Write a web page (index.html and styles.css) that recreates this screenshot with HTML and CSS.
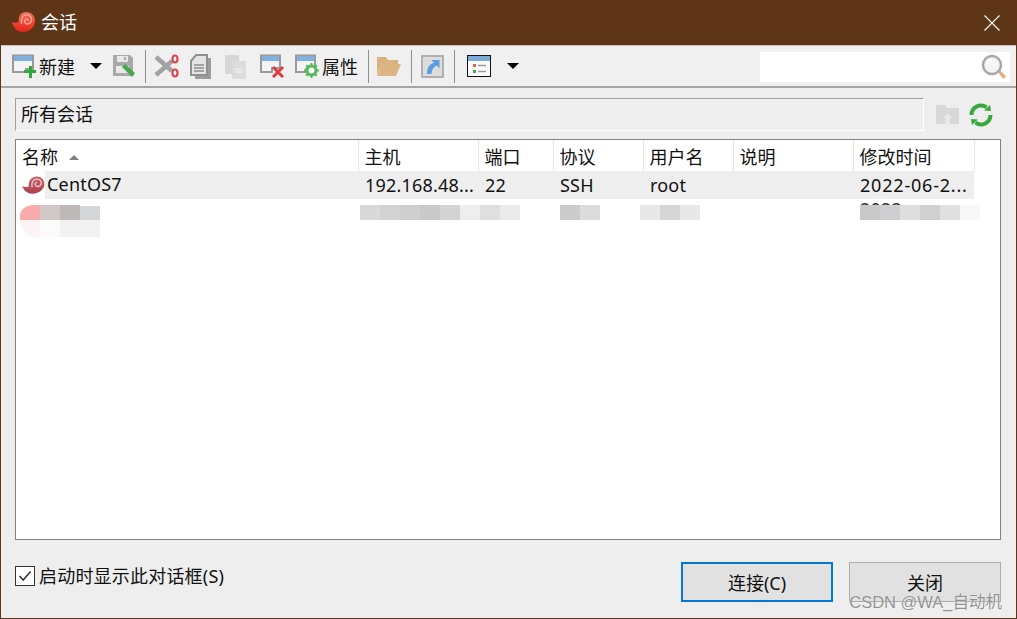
FILE: index.html
```html
<!DOCTYPE html>
<html lang="zh">
<head>
  <meta charset="utf-8">
  <title>会话</title>
  <link rel="stylesheet" href="styles.css">
</head>
<body>
<div class="window">

  <div class="titlebar">
    <svg class="title-icon" width="24" height="24" viewBox="0 0 24 24">
      <defs>
        <linearGradient id="shell" x1="0" y1="0" x2="0" y2="1">
          <stop offset="0" stop-color="#f0705c"/>
          <stop offset="1" stop-color="#e8221a"/>
        </linearGradient>
      </defs>
      <path d="M1 12C3 13 6 13 7.500 12C7 6 10 2 15 2C20 2 24 5.500 24 10.500C24 17 19 22 12 22C6 22 2.500 18 1 12Z" fill="url(#shell)"/>
      <path d="M10.500 14C10 8 12 5 15.500 4.800C19 4.700 21 7.500 20.500 10.500C19.800 13.500 16.500 14.800 14.500 13.300C13 12 13.500 9.500 15.500 9.300C16.800 9.200 17.500 10.200 17 11.300" fill="none" stroke="#f9a58e" stroke-width="1.500"/>
    </svg>
    <span class="title-text">会话</span>
    <svg class="title-close" width="16" height="16" viewBox="0 0 16 16">
      <path d="M0.500 0.500L15.500 15.500M15.500 0.500L0.500 15.500" stroke="#fff" stroke-width="1.100"/>
    </svg>
  </div>

  <div class="toolbar">
    <div class="tool tool-new">
      <svg width="24" height="24" viewBox="0 0 24 24">
        <path d="M1 1.500H21V15H14V18H1Z" fill="#f4f4f4" stroke="#9a9a9a" stroke-width="2"/>
        <rect x="2" y="2" width="18" height="5" fill="#7fb0e0"/>
        <path d="M17 12H20V16H24V19H20V24H17V19H12V16H17Z" fill="#2fa83a"/>
      </svg>
      <span class="tool-label">新建</span>
    </div>
    <span class="arrow arrow-new"></span>
    <svg class="ico-save" width="24" height="24" viewBox="0 0 24 24">
      <path d="M1 1H18L21 4V22H1Z" fill="#a9a9a9"/>
      <rect x="5" y="2" width="11" height="6" fill="#e9e9e9"/>
      <rect x="12" y="3" width="2" height="3" fill="#a9a9a9"/>
      <rect x="4" y="12" width="13" height="7" fill="#e9e9e9"/>
      <path d="M10 13L13 10L23 19L20 23Z" fill="#47a84e"/>
    </svg>
    <span class="sep sep-a"></span>
    <svg class="ico-cut" width="25" height="24" viewBox="0 0 25 24">
      <path d="M2 3L18 17M2 21L18 7" stroke="#a2a2a2" stroke-width="4.500"/>
      <ellipse cx="21" cy="5" rx="2.500" ry="3.500" fill="#fff" stroke="#e0434e" stroke-width="2.200"/>
      <ellipse cx="21" cy="19" rx="2.500" ry="3.500" fill="#fff" stroke="#e0434e" stroke-width="2.200"/>
    </svg>
    <svg class="ico-copy" width="21" height="25" viewBox="0 0 21 25">
      <rect x="5" y="4" width="16" height="21" fill="#9c9c9c"/>
      <path d="M1 7L6 1H17V21H1Z" fill="#e4e4e4" stroke="#8f8f8f" stroke-width="2"/>
      <path d="M4 11H14M4 14H14M4 17H14" stroke="#8f8f8f" stroke-width="1.500"/>
    </svg>
    <svg class="ico-paste" width="21" height="25" viewBox="0 0 21 25">
      <rect x="0" y="1" width="14" height="19" fill="#d6d6d6"/>
      <rect x="7" y="7" width="14" height="18" fill="#dcdcdc"/>
      <path d="M10 15H18M10 18H18" stroke="#ececec" stroke-width="1.500"/>
    </svg>
    <svg class="ico-del" width="24" height="24" viewBox="0 0 24 24">
      <path d="M1 1.500H20V14H12V18H1Z" fill="#f4f4f4" stroke="#9a9a9a" stroke-width="2"/>
      <rect x="2" y="2" width="17" height="5" fill="#7fb0e0"/>
      <path d="M13 13L23 23M23 13L13 23" stroke="#de3a42" stroke-width="3"/>
    </svg>
    <div class="tool tool-prop">
      <svg width="24" height="24" viewBox="0 0 24 24">
        <path d="M1 1.500H20V15H11V18H1Z" fill="#f4f4f4" stroke="#9a9a9a" stroke-width="2"/>
        <rect x="2" y="2" width="17" height="5" fill="#7fb0e0"/>
        <circle cx="16.500" cy="16.500" r="4.500" fill="#fff" stroke="#56b85c" stroke-width="3"/>
        <path d="M16.500 9V24M9 16.500H24M11.200 11.200L21.800 21.800M21.800 11.200L11.200 21.800" stroke="#56b85c" stroke-width="2" stroke-dasharray="2.500 10"/>
      </svg>
      <span class="tool-label">属性</span>
    </div>
    <span class="sep sep-b"></span>
    <svg class="ico-open" width="24" height="22" viewBox="0 0 24 22">
      <path d="M0 2H9L11 5H21V9H5L0 20Z" fill="#d9b280"/>
      <path d="M5 9H24L19 21H0Z" fill="#dcb582"/>
    </svg>
    <span class="sep sep-c"></span>
    <svg class="ico-go" width="23" height="23" viewBox="0 0 23 23">
      <rect x="1" y="1" width="21" height="21" fill="#dcdcdc" stroke="#b0b0b0" stroke-width="2"/>
      <path d="M6 19C6 12 9 8.500 13 8L10.500 5H18.500V13.500L16 10.500C13 11.500 11 14 10.500 19Z" fill="#5b9fdd"/>
    </svg>
    <span class="sep sep-d"></span>
    <svg class="ico-view" width="24" height="22" viewBox="0 0 24 22">
      <rect x="0.500" y="0.500" width="23" height="21" fill="#fafafa" stroke="#111"/>
      <rect x="1" y="1" width="22" height="5" fill="#7ba9d8"/>
      <rect x="6" y="9" width="3" height="3" fill="#e0605c"/>
      <rect x="6" y="15" width="3" height="3" fill="#3eae48"/>
      <path d="M11 10.500H19M11 16.500H19" stroke="#9c9c9c" stroke-width="1.500"/>
    </svg>
    <span class="arrow arrow-view"></span>
    <div class="search">
      <svg width="26" height="26" viewBox="0 0 26 26">
        <path d="M16 17L18 15L25 22.500L22.500 25Z" fill="#dfae7a"/>
        <circle cx="11" cy="11" r="9" fill="#f4f4f4" stroke="#a8a8a8" stroke-width="2.500"/>
        <path d="M6 10C6.500 7.500 8.500 6 11 6" fill="none" stroke="#fff" stroke-width="2"/>
      </svg>
    </div>
  </div>

  <div class="pathbar">
    <div class="path-field">所有会话</div>
    <svg class="ico-upfolder" width="23" height="22" viewBox="0 0 23 22">
      <path d="M0 1H9L11 4H23V20H0Z" fill="#d8d8d8"/>
      <path d="M11.500 9L16 14H13.500V22H9.500V14H7Z" fill="#e9e9e9"/>
    </svg>
    <svg class="ico-refresh" width="24" height="24" viewBox="0 0 24 24">
      <path d="M2.500 12A9.500 9.500 0 0 1 17.500 4.300" fill="none" stroke="#37a83f" stroke-width="4"/>
      <path d="M21.500 12A9.500 9.500 0 0 1 6.500 19.700" fill="none" stroke="#37a83f" stroke-width="4"/>
      <path d="M15 7.500L22 8L21 2Z" fill="#37a83f"/>
      <path d="M9 16.500L2 16L3 22Z" fill="#37a83f"/>
    </svg>
  </div>

  <div class="sessions">
    <table class="session-table">
      <colgroup>
        <col class="col-name"><col class="col-host"><col class="col-port"><col class="col-proto"><col class="col-user"><col class="col-desc"><col class="col-time">
      </colgroup>
      <thead>
        <tr>
          <th>名称<span class="sort-up"></span></th>
          <th>主机</th>
          <th>端口</th>
          <th>协议</th>
          <th>用户名</th>
          <th>说明</th>
          <th>修改时间</th>
        </tr>
      </thead>
      <tbody>
        <tr class="row-active">
          <td class="td-name">
            <div class="name-wrap">
              <svg class="row-icon" width="23" height="18" viewBox="0 0 24 19">
                <defs>
                  <linearGradient id="shell-dim" x1="0" y1="0" x2="0" y2="1">
                    <stop offset="0" stop-color="#c9656f"/>
                    <stop offset="1" stop-color="#ad3f4c"/>
                  </linearGradient>
                </defs>
                <path d="M0 10C2 12 5 12 7 11C6.500 5 10 0.500 15.500 0.500C20.500 0.500 23.500 4 23.500 8.500C23.500 14 18 18.500 11 18.700C5 18.800 1.500 15 0 10Z" fill="url(#shell-dim)"/>
                <path d="M10.500 12C9.500 7 11.500 3.500 15.500 3.300C19 3.200 20.800 5.800 20 8.500C19.300 11 16 11.800 14.500 10.300C13.200 9 14 7 15.500 6.800" fill="none" stroke="#efcbcd" stroke-width="1.400"/>
              </svg>
              <span class="name-text">CentOS7</span>
            </div>
          </td>
          <td>192.168.48...</td>
          <td>22</td>
          <td>SSH</td>
          <td>root</td>
          <td></td>
          <td class="td-date">2022-06-2...</td>
        </tr>
        <tr class="row-blur">
          <td>
            <svg class="mosaic mosaic-name" width="80" height="32" viewBox="0 0 80 32">
              <path d="M0 15V10C1 4 6 0 14 0H20V15Z" fill="#f8abab"/>
              <rect x="20" width="20" height="15" fill="#d3c8c8"/>
              <rect x="40" width="20" height="15" fill="#bdb9b7"/>
              <rect x="60" y="1" width="20" height="14" fill="#d5d6da"/>
              <path d="M0 15H20V32H12C6 31 1 24 0 15Z" fill="#fdf5f5"/>
              <rect x="20" y="15" width="20" height="17" fill="#fcfbfa"/>
              <rect x="40" y="15" width="40" height="17" fill="#f2f2f2"/>
            </svg>
          </td>
          <td>
            <svg class="mosaic mosaic-host" width="160" height="15" viewBox="0 0 160 15">
              <rect width="20" height="15" fill="#d9d9d9"/>
              <rect x="20" width="20" height="15" fill="#d2d2d2"/>
              <rect x="40" width="20" height="15" fill="#cfcfcf"/>
              <rect x="60" width="20" height="15" fill="#c8c9cb"/>
              <rect x="80" width="20" height="15" fill="#d3d3d3"/>
              <rect x="100" width="20" height="15" fill="#eeeeee"/>
              <rect x="120" width="20" height="15" fill="#dfdfdf"/>
              <rect x="140" width="20" height="15" fill="#e9eaec"/>
            </svg>
          </td>
          <td></td>
          <td>
            <svg class="mosaic mosaic-proto" width="40" height="15" viewBox="0 0 40 15">
              <rect width="20" height="15" fill="#cbcbcb"/>
              <rect x="20" width="20" height="15" fill="#dcdcdc"/>
            </svg>
          </td>
          <td>
            <svg class="mosaic mosaic-user" width="60" height="15" viewBox="0 0 60 15">
              <rect width="20" height="15" fill="#e8e8e8"/>
              <rect x="20" width="20" height="15" fill="#d6d6d6"/>
              <rect x="40" width="20" height="15" fill="#e8e8e8"/>
            </svg>
          </td>
          <td></td>
          <td>
            <span class="time-peek">2022</span>
            <svg class="mosaic mosaic-time" width="120" height="15" viewBox="0 0 120 15">
              <rect width="20" height="15" fill="#c9c9c9"/>
              <rect x="20" width="20" height="15" fill="#cdcecf"/>
              <rect x="40" width="20" height="15" fill="#dedede"/>
              <rect x="60" width="20" height="15" fill="#cfd0d2"/>
              <rect x="80" width="20" height="15" fill="#e0e0e0"/>
              <rect x="100" width="20" height="15" fill="#f8f8f8"/>
            </svg>
          </td>
        </tr>
      </tbody>
    </table>
  </div>

  <div class="footer">
    <label class="startup">
      <span class="checkbox">
        <svg width="18" height="18" viewBox="0 0 18 18">
          <path d="M3.500 9L7.200 13L14.500 4.500" fill="none" stroke="#333" stroke-width="1.500"/>
        </svg>
      </span>
      启动时显示此对话框(S)
    </label>
    <div class="buttons">
      <button class="btn btn-default">连接(C)</button>
      <button class="btn">关闭</button>
    </div>
    <span class="watermark">CSDN @WA_自动机</span>
  </div>

</div>
</body>
</html>
```

FILE: styles.css
```css
html, body {
  margin: 0;
  height: 100%;
  overflow: hidden;
}
body {
  font-family: "Noto Sans", "Noto Sans CJK SC", sans-serif;
  font-size: 18px;
  color: #111;
}

.window {
  box-sizing: border-box;
  width: 1017px;
  height: 619px;
  display: flex;
  flex-direction: column;
  background: #eeeeee;
  border: 1px solid #5e3617;
  border-top: 0;
}

.titlebar {
  flex: none;
  height: 45px;
  margin: 0 -1px;
  padding: 0 17px 0 11px;
  display: flex;
  align-items: center;
  background: #5e3617;
  color: #fff;
}
.title-icon { margin-top: -1px; }
.title-text { margin-left: 6px; margin-top: -1px; line-height: 24px; }
.title-close { margin-left: auto; }

.toolbar {
  flex: none;
  box-sizing: border-box;
  height: 43px;
  padding-left: 11px;
  display: flex;
  align-items: center;
  background: #f0f0f0;
  border-top: 1px solid #c4c4c4;
  border-bottom: 2px solid #a6a6a6;
}
.tool {
  display: flex;
  align-items: center;
}
.tool-label { margin-left: 3px; line-height: 24px; padding-top: 1px; }
.sep {
  flex: none;
  width: 1px;
  height: 33px;
  background: #8f8f8f;
}
.arrow {
  flex: none;
  width: 0;
  height: 0;
  border-left: 6px solid transparent;
  border-right: 6px solid transparent;
  border-top: 6px solid #000;
}
.arrow-new { margin-left: 15px; }
.ico-save { margin-left: 10px; }
.sep-a { margin-left: 9px; }
.ico-cut { margin-left: 8px; }
.ico-copy { margin-left: 11px; }
.ico-paste { margin-left: 14px; }
.ico-del { margin-left: 14px; }
.tool-prop { margin-left: 11px; }
.sep-b { margin-left: 10px; }
.ico-open { margin-left: 8px; }
.sep-c { margin-left: 10px; }
.ico-go { margin-left: 9px; }
.sep-d { margin-left: 10px; }
.ico-view { margin-left: 12px; }
.arrow-view { margin-left: 16px; }

.search {
  margin-left: auto;
  margin-right: 6px;
  margin-top: 1px;
  box-sizing: border-box;
  width: 250px;
  height: 30px;
  padding-right: 3px;
  display: flex;
  align-items: center;
  justify-content: flex-end;
  background: #fff;
}

.pathbar {
  flex: none;
  height: 33px;
  margin-top: 10px;
  padding-left: 14px;
  display: flex;
  align-items: center;
}
.path-field {
  box-sizing: border-box;
  width: 909px;
  height: 33px;
  padding-left: 5px;
  line-height: 30px;
  background: #efefef;
  border-top: 1px solid #a0a0a0;
  border-left: 1px solid #a0a0a0;
  border-right: 1px solid #fff;
  border-bottom: 1px solid #fff;
}
.ico-upfolder { margin-left: 12px; }
.ico-refresh { margin-left: 10px; }

.sessions {
  flex: none;
  box-sizing: border-box;
  height: 401px;
  margin: 8px 15px 0 14px;
  background: #fff;
  border: 1px solid #828282;
}
.session-table {
  width: 958px;
  table-layout: fixed;
  border-collapse: collapse;
}
.col-name { width: 342px; }
.col-host { width: 120px; }
.col-port { width: 75px; }
.col-proto { width: 90px; }
.col-user { width: 90px; }
.col-desc { width: 120px; }
.col-time { width: 121px; }

.session-table th {
  height: 28px;
  padding: 3px 0 0 6px;
  line-height: 24px;
  font-weight: normal;
  text-align: left;
  border-right: 1px solid #e5e5e5;
}
.session-table td {
  height: 27px;
  padding: 0 0 1px 7px;
  line-height: 24px;
  white-space: nowrap;
  letter-spacing: 0.2px;
}
.session-table .td-date { letter-spacing: 0.8px; }
.sort-up {
  display: inline-block;
  margin-left: 11px;
  vertical-align: 4px;
  border-left: 5px solid transparent;
  border-right: 5px solid transparent;
  border-bottom: 5px solid #808080;
}
.row-active td { background: #eeeeee; }
.row-active .td-name {
  padding: 0;
  background: #fff;
}
.name-wrap {
  height: 28px;
  display: flex;
  align-items: center;
}
.row-icon { margin-left: 6px; }
.name-text {
  flex: 1;
  height: 28px;
  line-height: 26px;
  padding-left: 2px;
  background: #eeeeee;
}

.row-blur td {
  position: relative;
  height: 38px;
  vertical-align: top;
}
.mosaic {
  position: absolute;
  top: 6px;
  left: 2px;
}
.mosaic-name { left: 4px; }
.mosaic-proto { left: 7px; }
.mosaic-user { left: -3px; }
.mosaic-time { left: 7px; }
.time-peek {
  display: block;
  line-height: 20px;
  color: #333;
}

.footer {
  flex: 1;
  position: relative;
  display: flex;
  padding: 22px 15px 0 14px;
  align-items: flex-start;
  justify-content: space-between;
}
.startup {
  margin-top: 3px;
  display: flex;
  align-items: center;
  height: 22px;
  line-height: 20px;
  letter-spacing: 0.2px;
}
.checkbox {
  box-sizing: border-box;
  width: 20px;
  height: 20px;
  margin-right: 4px;
  display: flex;
  align-items: center;
  justify-content: center;
  background: #fff;
  border: 1px solid #333;
}
.buttons {
  display: flex;
  gap: 16px;
}
.btn {
  box-sizing: border-box;
  width: 152px;
  height: 40px;
  padding: 0 0 1px;
  font: inherit;
  color: #111;
  background: #e1e1e1;
  border: 1px solid #adadad;
}
.btn-default { border: 2px solid #0078d7; }
.watermark {
  position: absolute;
  right: 14px;
  bottom: 6px;
  font-family: "Liberation Sans", "Noto Sans CJK SC", sans-serif;
  font-size: 16.500px;
  line-height: 20px;
  color: rgba(110, 110, 110, 0.75);
  text-shadow: 0 0 1px #fff;
}
```
